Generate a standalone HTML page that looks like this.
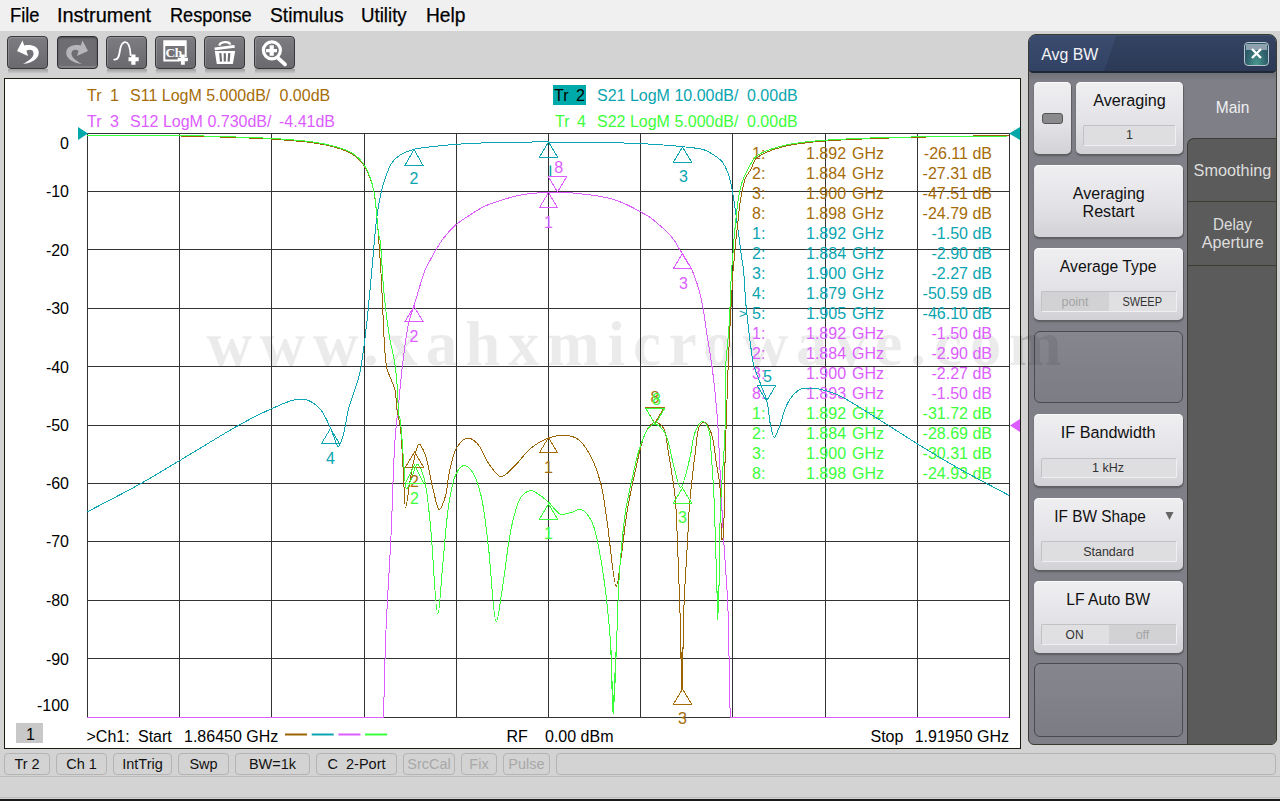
<!DOCTYPE html><html><head><meta charset="utf-8"><style>

*{box-sizing:border-box}
html,body{margin:0;padding:0;width:1280px;height:801px;overflow:hidden;background:#d3d3d3;font-family:"Liberation Sans",sans-serif;position:relative}
.abs{position:absolute}
#menu{left:0;top:0;width:1280px;height:31px;background:#f0f0f0}
.mi{position:absolute;top:3px;font-size:20px;line-height:24px;color:#000;white-space:pre;transform-origin:0 0;-webkit-text-stroke:0.25px #000}
.tb{position:absolute;top:36px;width:41px;height:33px;border-radius:4px;background:linear-gradient(#7c7c81,#69696e);border:1px solid #38383c;box-shadow:inset 1px 1px 0 rgba(255,255,255,.18)}
.tbsh{position:absolute;left:0px;top:32px;width:40px;height:5px;background:linear-gradient(rgba(0,0,0,.26),rgba(0,0,0,0))}
.tbd{background:#6d6d72;border-color:#303034;box-shadow:inset 0 -2px 0 rgba(255,255,255,.15),inset 0 1px 2px rgba(0,0,0,.3)}
.tb svg{position:absolute;left:-1px;top:-1px}
#chart{left:4px;top:78px;width:1017px;height:671px;background:#fff;border:1px solid #1c1c10}
#panel{left:1028px;top:34px;width:249px;height:711px;background:#7f7f87;border:1px solid #3a3a30;border-radius:8px 8px 6px 6px;overflow:hidden}
#ptitle{left:0;top:0;width:247px;height:38px;background:linear-gradient(rgba(255,255,255,0.03),rgba(0,0,0,0.05)),linear-gradient(109.4deg,#34466a 33.7%,#2e3d5c 33.8%);border-bottom:2px solid #1f2636;box-shadow:inset 0 1px 0 #3f5173;border-radius:0 0 4px 4px}
.pbtn{position:absolute;border-radius:5px;background:linear-gradient(#efeff2,#e2e2e6 60%,#d2d2d6);box-shadow:inset 0 1px 0 #fafafa,1px 1px 0 #5e5e63,0 2px 2px rgba(0,0,0,.3)}
.pbtn .t{position:absolute;left:0;width:100%;text-align:center;font-size:16px;color:#101010;line-height:19px}
.fld{position:absolute;background:#dedee0;border:1px solid;border-color:#c2c2c6 #f0f0f2 #f0f0f2 #c2c2c6;border-radius:2px}
.pempty{position:absolute;border-radius:6px;background:linear-gradient(#86868e,#7c7c84);border:1px solid #4a4a50}
.sb{position:absolute;top:753px;height:22px;border:1px solid #b4b4b4;border-radius:4px;font-size:14.5px;line-height:21px;text-align:center;color:#111;white-space:pre}
.sb.dis{color:#a8a8a8}

</style></head><body>
<div id="menu" class="abs"></div>
<div class="mi" style="left:10px;transform:scaleX(0.915)">File</div>
<div class="mi" style="left:57px;transform:scaleX(0.996)">Instrument</div>
<div class="mi" style="left:170px;transform:scaleX(0.907)">Response</div>
<div class="mi" style="left:270px;transform:scaleX(0.96)">Stimulus</div>
<div class="mi" style="left:361px;transform:scaleX(0.934)">Utility</div>
<div class="mi" style="left:426px;transform:scaleX(0.96)">Help</div>
<div class="tb" style="left:7px"><div class="tbsh"></div><svg width="41" height="33" viewBox="0 0 41 33"><path d="M10,15 L15.5,4.5 L17.2,9.4 C23,8 31.5,9.5 31.8,16.5 C32,22.5 25,27 16,28 C22.5,24.5 27,21 26.5,17 C26,13.5 22.5,13 19.4,14.8 L21,20 Z" fill="#fff"/></svg></div>
<div class="tb tbd" style="left:57px"><svg width="41" height="33" viewBox="0 0 41 33"><path d="M31,15 L25.5,4.5 L23.8,9.4 C18,8 9.5,9.5 9.2,16.5 C9,22.5 16,27 25,28 C18.5,24.5 14,21 14.5,17 C15,13.5 18.5,13 21.6,14.8 L20,20 Z" fill="#b6b6ba"/></svg></div>
<div class="tb" style="left:106px"><div class="tbsh"></div><svg width="41" height="33" viewBox="0 0 41 33"><path d="M8.2,23.6 C12,23.8 13,21 14,14 C15,8 17,6 19.4,6.1 C22.5,6.2 24,10 24.6,19" fill="none" stroke="#fff" stroke-width="1.8" stroke-linecap="round"/><path d="M25.3,18.6 h4.2 v2.7 h3.2 v3.9 h-3.2 v3.6 h-4.2 v-3.6 h-2.8 v-3.9 h2.8 z" fill="#fff"/></svg></div>
<div class="tb" style="left:155px"><div class="tbsh"></div><svg width="41" height="33" viewBox="0 0 41 33"><path d="M8.3,4.2 H31.7 V21 H29.7 V10 H10.3 V23.6 H24 V25.6 H8.3 Z" fill="#fff"/><text x="10.6" y="21" font-family="Liberation Serif" font-weight="bold" font-size="13.5" fill="#fff" letter-spacing="-0.5">Ch</text><path d="M25.9,18.6 h3.9 v3.1 h3.1 v3.5 h-3.1 v3.6 h-3.9 v-3.6 h-3.2 v-3.5 h3.2 z" fill="#fff"/></svg></div>
<div class="tb" style="left:204px"><div class="tbsh"></div><svg width="41" height="33" viewBox="0 0 41 33"><path d="M10.5,11.6 L30.4,9 L30.8,11.8 L10.8,14.3 Z" fill="#fff"/><path d="M15.4,9.6 C16,5.5 25.5,5 26.2,8.6" fill="none" stroke="#fff" stroke-width="2.3"/><path d="M10.8,15 H31.2 L28.8,28 H12.8 Z" fill="#fff"/><path d="M16.3,17.2 L17,25.6 M20.8,17.2 L20.8,25.6 M25.3,17.2 L24.6,25.6" stroke="#6c6c71" stroke-width="2.2"/></svg></div>
<div class="tb" style="left:254px"><div class="tbsh"></div><svg width="41" height="33" viewBox="0 0 41 33"><circle cx="17.9" cy="14.3" r="8.5" fill="none" stroke="#fff" stroke-width="3.2"/><path d="M23.8,21.8 L31,28.4" stroke="#fff" stroke-width="3.8" stroke-linecap="round"/><path d="M15.6,9.3 h4.2 v3.8 h3.2 v3.2 h-3.2 v3.5 h-4.2 v-3.5 h-3.6 v-3.2 h3.6 z" fill="#fff"/></svg></div>
<div id="chart" class="abs"></div>
<svg class="abs" style="left:0;top:0" width="1280" height="801" viewBox="0 0 1280 801"><defs><clipPath id="pc"><rect x="5" y="79" width="1015" height="669"/></clipPath></defs><g fill="#000" fill-opacity="0.08"><text x="206.5" y="364.5" font-family="Liberation Serif" font-weight="bold" font-size="63" textLength="855" lengthAdjust="spacing">www.xahxmicrowave.com</text></g><path d="M87.5,133 V717.5 M87,133.5 H1009.5 M179.5,133 V717.5 M87,191.5 H1009.5 M271.5,133 V717.5 M87,249.5 H1009.5 M364.5,133 V717.5 M87,308.5 H1009.5 M456.5,133 V717.5 M87,366.5 H1009.5 M548.5,133 V717.5 M87,425.5 H1009.5 M640.5,133 V717.5 M87,483.5 H1009.5 M732.5,133 V717.5 M87,541.5 H1009.5 M825.5,133 V717.5 M87,600.5 H1009.5 M917.5,133 V717.5 M87,658.5 H1009.5 M1009.5,133 V717.5 M87,717.5 H1009.5" stroke="#333" stroke-width="1" fill="none" shape-rendering="crispEdges"/><text x="69" y="148.5" text-anchor="end" font-size="16" fill="#000">0</text><text x="69" y="196.5" text-anchor="end" font-size="16" fill="#000">-10</text><text x="69" y="255.5" text-anchor="end" font-size="16" fill="#000">-20</text><text x="69" y="313.5" text-anchor="end" font-size="16" fill="#000">-30</text><text x="69" y="372.5" text-anchor="end" font-size="16" fill="#000">-40</text><text x="69" y="430.5" text-anchor="end" font-size="16" fill="#000">-50</text><text x="69" y="488.5" text-anchor="end" font-size="16" fill="#000">-60</text><text x="69" y="546.5" text-anchor="end" font-size="16" fill="#000">-70</text><text x="69" y="605.5" text-anchor="end" font-size="16" fill="#000">-80</text><text x="69" y="664.5" text-anchor="end" font-size="16" fill="#000">-90</text><text x="69" y="710.5" text-anchor="end" font-size="16" fill="#000">-100</text><text x="87" y="101" font-size="16" fill="#a56c08">Tr</text><text x="110" y="101" font-size="16" fill="#a56c08">1</text><text x="130" y="101" font-size="16" fill="#a56c08">S11 LogM 5.000dB/</text><text x="279.5" y="101" font-size="16" fill="#a56c08">0.00dB</text><text x="87" y="126.5" font-size="16" fill="#dc5cff">Tr</text><text x="110" y="126.5" font-size="16" fill="#dc5cff">3</text><text x="130" y="126.5" font-size="16" fill="#dc5cff">S12 LogM 0.730dB/</text><text x="279" y="126.5" font-size="16" fill="#dc5cff">-4.41dB</text><rect x="553" y="85" width="33" height="20" fill="#00aaaa"/><text x="554" y="101" font-size="16" fill="#000">Tr</text><text x="576" y="101" font-size="16" fill="#000">2</text><text x="597" y="101" font-size="16" fill="#0aa5b0">S21 LogM 10.00dB/</text><text x="747" y="101" font-size="16" fill="#0aa5b0">0.00dB</text><text x="555" y="126.5" font-size="16" fill="#3cff3c">Tr</text><text x="577" y="126.5" font-size="16" fill="#3cff3c">4</text><text x="597" y="126.5" font-size="16" fill="#3cff3c">S22 LogM 5.000dB/</text><text x="747" y="126.5" font-size="16" fill="#3cff3c">0.00dB</text><g fill="#a56c08" font-size="16"><text x="752" y="158.8">1:</text><text x="806" y="158.8">1.892</text><text x="852" y="158.8">GHz</text><text x="992" y="158.8" text-anchor="end">-26.11 dB</text></g><g fill="#a56c08" font-size="16"><text x="752" y="178.8">2:</text><text x="806" y="178.8">1.884</text><text x="852" y="178.8">GHz</text><text x="992" y="178.8" text-anchor="end">-27.31 dB</text></g><g fill="#a56c08" font-size="16"><text x="752" y="198.8">3:</text><text x="806" y="198.8">1.900</text><text x="852" y="198.8">GHz</text><text x="992" y="198.8" text-anchor="end">-47.51 dB</text></g><g fill="#a56c08" font-size="16"><text x="752" y="218.8">8:</text><text x="806" y="218.8">1.898</text><text x="852" y="218.8">GHz</text><text x="992" y="218.8" text-anchor="end">-24.79 dB</text></g><g fill="#0aa5b0" font-size="16"><text x="752" y="238.8">1:</text><text x="806" y="238.8">1.892</text><text x="852" y="238.8">GHz</text><text x="992" y="238.8" text-anchor="end">-1.50 dB</text></g><g fill="#0aa5b0" font-size="16"><text x="752" y="258.8">2:</text><text x="806" y="258.8">1.884</text><text x="852" y="258.8">GHz</text><text x="992" y="258.8" text-anchor="end">-2.90 dB</text></g><g fill="#0aa5b0" font-size="16"><text x="752" y="278.8">3:</text><text x="806" y="278.8">1.900</text><text x="852" y="278.8">GHz</text><text x="992" y="278.8" text-anchor="end">-2.27 dB</text></g><g fill="#0aa5b0" font-size="16"><text x="752" y="298.8">4:</text><text x="806" y="298.8">1.879</text><text x="852" y="298.8">GHz</text><text x="992" y="298.8" text-anchor="end">-50.59 dB</text></g><g fill="#0aa5b0" font-size="16"><text x="752" y="318.8">5:</text><text x="806" y="318.8">1.905</text><text x="852" y="318.8">GHz</text><text x="992" y="318.8" text-anchor="end">-46.10 dB</text></g><g fill="#dc5cff" font-size="16"><text x="752" y="338.8">1:</text><text x="806" y="338.8">1.892</text><text x="852" y="338.8">GHz</text><text x="992" y="338.8" text-anchor="end">-1.50 dB</text></g><g fill="#dc5cff" font-size="16"><text x="752" y="358.8">2:</text><text x="806" y="358.8">1.884</text><text x="852" y="358.8">GHz</text><text x="992" y="358.8" text-anchor="end">-2.90 dB</text></g><g fill="#dc5cff" font-size="16"><text x="752" y="378.8">3:</text><text x="806" y="378.8">1.900</text><text x="852" y="378.8">GHz</text><text x="992" y="378.8" text-anchor="end">-2.27 dB</text></g><g fill="#dc5cff" font-size="16"><text x="752" y="398.8">8:</text><text x="806" y="398.8">1.893</text><text x="852" y="398.8">GHz</text><text x="992" y="398.8" text-anchor="end">-1.50 dB</text></g><g fill="#3cff3c" font-size="16"><text x="752" y="418.8">1:</text><text x="806" y="418.8">1.892</text><text x="852" y="418.8">GHz</text><text x="992" y="418.8" text-anchor="end">-31.72 dB</text></g><g fill="#3cff3c" font-size="16"><text x="752" y="438.8">2:</text><text x="806" y="438.8">1.884</text><text x="852" y="438.8">GHz</text><text x="992" y="438.8" text-anchor="end">-28.69 dB</text></g><g fill="#3cff3c" font-size="16"><text x="752" y="458.8">3:</text><text x="806" y="458.8">1.900</text><text x="852" y="458.8">GHz</text><text x="992" y="458.8" text-anchor="end">-30.31 dB</text></g><g fill="#3cff3c" font-size="16"><text x="752" y="478.8">8:</text><text x="806" y="478.8">1.898</text><text x="852" y="478.8">GHz</text><text x="992" y="478.8" text-anchor="end">-24.93 dB</text></g><text x="739" y="318" font-size="13" fill="#0aa5b0">&gt;</text><g clip-path="url(#pc)" fill="none" stroke-width="1" shape-rendering="crispEdges"><path d="M87,717.5 H383.5 L383.50,717.00 C384.33,688.00 384.79,659.55 386.00,630.00 C387.26,599.27 389.51,567.50 391.00,536.00 C392.51,504.17 393.26,464.60 395.00,440.00 C396.09,424.60 397.50,415.00 398.75,402.50 C400.00,390.00 400.91,377.87 402.50,365.00 C404.20,351.26 406.14,333.95 408.75,322.50 C410.57,314.51 412.68,309.97 415.00,302.50 C417.95,292.98 422.34,276.52 425.00,270.00 C426.20,267.05 426.86,266.30 428.20,263.80 C430.28,259.91 433.61,253.57 436.40,249.00 C438.92,244.87 441.15,241.27 444.10,237.50 C447.29,233.42 450.99,229.06 455.00,225.50 C458.99,221.96 463.42,219.26 468.10,216.20 C473.22,212.85 478.98,208.99 484.60,206.30 C489.96,203.74 495.41,202.10 501.00,200.30 C506.70,198.46 512.72,196.59 518.50,195.40 C524.02,194.26 529.68,193.68 534.90,193.20 C539.64,192.76 544.16,192.65 548.50,192.50 C552.49,192.36 556.21,192.25 560.00,192.30 C563.71,192.35 567.19,192.49 571.00,192.80 C575.16,193.13 579.56,193.78 584.00,194.30 C588.65,194.85 593.56,195.19 598.30,196.00 C603.06,196.82 607.91,197.83 612.50,199.20 C617.00,200.54 621.16,202.12 625.60,204.10 C630.45,206.26 635.92,209.35 640.40,211.80 C644.20,213.88 647.68,215.59 650.80,217.80 C653.66,219.83 655.95,222.20 658.50,224.40 C661.05,226.60 663.64,228.56 666.10,231.00 C668.75,233.62 671.57,236.64 673.80,239.70 C675.95,242.65 677.69,246.41 679.30,249.00 C680.49,250.91 681.33,251.96 682.50,253.90 C684.13,256.60 686.54,261.65 688.00,263.80 C688.77,264.94 689.24,264.96 690.00,266.25 C691.92,269.50 695.42,278.58 697.50,285.00 C699.60,291.49 701.09,297.93 702.50,305.00 C704.06,312.83 704.83,320.69 706.25,330.00 C708.05,341.78 710.69,355.90 712.50,370.00 C714.51,385.71 716.25,403.32 717.50,420.00 C718.75,436.65 719.17,453.33 720.00,470.00 C720.83,486.67 721.61,504.26 722.50,520.00 C723.29,534.08 724.14,546.27 725.00,560.00 C725.91,574.56 727.06,587.22 727.80,605.00 C728.87,630.81 729.32,681.17 729.80,700.00 C730.00,707.96 730.13,711.33 730.30,717.00 H1009" stroke="#dc5cff"/><path d="M87.00,512.00 C104.67,502.67 123.78,493.06 140.00,484.00 C154.09,476.13 164.51,469.59 179.00,461.00 C197.29,450.15 223.90,433.36 241.00,424.00 C252.66,417.62 261.35,413.23 271.00,409.00 C279.61,405.22 289.08,400.53 296.00,399.50 C300.64,398.81 304.15,398.88 308.00,400.30 C312.40,401.92 317.06,405.61 320.60,409.70 C324.56,414.27 327.63,421.96 330.00,427.00 C331.75,430.73 332.65,433.72 334.00,437.00 C335.32,440.21 336.55,446.44 338.00,446.50 C339.40,446.56 341.12,441.83 342.50,438.00 C344.96,431.17 346.21,417.48 348.75,408.00 C351.11,399.22 354.98,389.57 357.00,383.00 C358.30,378.77 358.99,377.27 360.00,372.50 C362.05,362.77 364.54,341.83 366.25,327.50 C367.81,314.45 368.73,303.40 370.00,290.00 C371.47,274.53 373.27,252.91 374.50,240.00 C375.28,231.83 375.55,227.15 376.50,220.00 C377.61,211.66 379.16,201.04 381.00,193.00 C382.52,186.34 384.17,180.44 386.25,175.00 C388.08,170.23 389.94,165.48 392.50,162.00 C394.66,159.06 396.91,156.98 400.00,155.00 C403.72,152.62 408.89,150.74 413.75,149.40 C418.86,147.99 423.99,147.66 430.00,146.90 C437.43,145.96 445.82,145.08 455.00,144.40 C466.23,143.57 478.75,143.00 492.50,142.60 C509.30,142.11 527.45,141.92 548.50,142.00 C575.69,142.10 616.00,142.44 642.00,143.70 C660.66,144.61 678.80,146.14 690.00,147.50 C696.08,148.24 699.59,148.25 704.00,149.80 C708.46,151.37 713.36,154.62 716.60,156.90 C718.88,158.51 720.36,159.55 722.00,161.60 C724.08,164.19 726.06,168.22 727.50,171.70 C728.91,175.09 729.75,178.75 730.60,182.20 C731.40,185.48 731.86,188.28 732.50,191.90 C733.32,196.48 734.26,202.34 735.00,207.50 C735.72,212.54 736.20,217.31 736.90,222.50 C737.66,228.11 738.65,234.39 739.40,240.00 C740.09,245.19 740.57,250.00 741.25,255.00 C741.93,260.00 742.86,264.09 743.50,270.00 C744.42,278.46 744.84,291.93 745.60,301.00 C746.20,308.11 746.74,313.24 747.50,320.00 C748.37,327.77 749.60,337.47 750.60,345.00 C751.42,351.22 751.93,357.12 753.00,362.00 C753.84,365.81 754.78,368.42 756.00,372.00 C757.45,376.26 759.53,381.04 761.30,385.80 C763.19,390.88 765.54,395.79 767.00,401.60 C768.69,408.34 768.87,417.52 770.30,424.00 C771.43,429.11 772.68,437.39 774.30,437.50 C775.89,437.61 778.19,429.61 779.90,425.20 C781.79,420.31 783.06,414.15 785.00,409.40 C786.69,405.28 788.06,401.52 790.60,398.20 C793.24,394.75 797.13,390.71 800.70,389.20 C803.66,387.94 806.96,388.54 810.00,388.50 C812.92,388.46 815.23,388.31 818.60,388.90 C823.66,389.78 829.84,391.32 837.20,394.60 C849.53,400.09 869.56,413.79 884.00,422.70 C896.62,430.48 907.42,437.76 919.20,445.00 C930.89,452.19 941.29,458.57 954.40,466.00 C970.52,475.14 990.80,485.60 1009.00,495.40" stroke="#0aa5b0"/><path d="M87.00,136.00 C118.00,136.00 155.45,135.69 180.00,136.00 C196.11,136.20 205.86,136.55 220.00,137.00 C235.97,137.51 258.12,138.24 271.00,139.00 C278.87,139.46 283.37,139.91 290.00,140.50 C297.30,141.15 305.36,141.64 313.00,142.80 C320.70,143.97 329.11,145.42 336.00,147.50 C341.91,149.29 347.73,151.47 352.00,154.00 C355.30,155.95 357.67,158.01 360.00,160.50 C362.34,163.00 364.18,165.64 366.00,169.00 C368.27,173.18 370.59,179.59 372.00,184.00 C373.07,187.34 373.55,189.41 374.20,193.00 C375.14,198.22 375.80,205.36 376.50,212.40 C377.34,220.78 378.02,230.09 378.75,240.00 C379.61,251.54 380.54,265.00 381.25,277.50 C381.96,290.00 382.38,302.50 383.00,315.00 C383.63,327.50 384.13,342.59 385.00,352.50 C385.58,359.04 385.80,363.89 387.00,368.75 C388.03,372.91 389.88,376.36 391.25,380.00 C392.54,383.43 394.07,386.02 395.00,390.00 C396.27,395.46 396.06,403.62 397.00,410.00 C397.87,415.92 399.38,419.89 400.30,427.00 C401.82,438.69 402.46,459.38 403.40,473.75 C404.20,486.05 404.41,507.94 405.60,508.00 C406.63,508.05 408.24,491.32 409.70,483.00 C411.17,474.66 412.58,465.08 414.40,458.00 C415.79,452.61 417.09,444.19 419.00,444.00 C420.77,443.82 423.41,450.14 425.30,455.00 C428.44,463.06 430.36,479.11 433.00,489.00 C435.08,496.80 437.09,509.57 439.40,509.70 C441.34,509.81 444.00,501.02 445.60,495.60 C447.60,488.83 447.54,479.84 449.40,471.90 C451.35,463.61 453.26,452.76 457.20,446.90 C460.08,442.61 464.42,438.26 468.00,438.00 C471.19,437.77 474.49,440.67 477.50,443.75 C482.03,448.39 485.55,459.78 490.00,465.60 C493.49,470.17 497.00,476.36 501.00,476.60 C505.28,476.86 510.39,469.90 515.00,465.60 C520.27,460.69 524.80,453.07 530.60,448.40 C536.11,443.97 542.67,440.17 548.75,438.00 C554.14,436.08 559.97,434.99 565.00,435.30 C569.47,435.58 573.69,436.43 577.50,439.00 C582.22,442.18 586.39,448.29 590.00,454.70 C594.54,462.75 598.20,473.87 601.00,484.40 C604.01,495.74 604.87,506.74 607.00,520.60 C609.86,539.24 613.57,586.21 616.25,586.25 C618.01,586.27 619.41,568.62 621.00,558.00 C623.05,544.33 624.85,525.25 627.20,511.00 C629.18,499.00 630.98,489.91 633.75,478.00 C637.07,463.72 641.12,440.33 646.25,431.25 C648.82,426.70 651.71,422.86 654.70,422.50 C657.45,422.17 661.25,424.90 663.40,428.00 C666.57,432.58 666.54,442.08 668.00,450.00 C669.70,459.21 671.50,471.00 672.80,480.00 C673.86,487.33 674.70,492.18 675.40,500.00 C676.39,510.99 676.75,524.90 677.40,539.80 C678.23,558.86 679.07,581.83 679.80,605.00 C680.63,631.46 681.30,690.00 682.00,690.00 C682.70,690.00 682.96,631.45 684.00,605.00 C684.91,581.82 686.61,557.90 687.60,539.80 C688.31,526.88 688.61,517.05 689.40,506.60 C690.11,497.23 691.05,488.72 692.00,480.00 C692.92,471.53 693.75,463.70 695.00,455.00 C696.37,445.44 696.78,429.36 700.00,425.00 C701.38,423.13 703.44,422.04 705.00,422.50 C707.31,423.18 709.56,428.41 711.25,433.00 C713.89,440.18 714.74,453.07 716.25,462.50 C717.64,471.17 719.07,477.61 720.00,487.50 C721.34,501.76 720.55,539.69 722.00,540.00 C722.30,540.06 722.71,539.18 723.00,538.00 C724.50,531.99 723.98,498.62 724.50,480.00 C724.98,462.71 725.54,444.55 726.00,430.00 C726.36,418.73 726.66,410.20 727.00,400.00 C727.36,389.38 727.68,378.00 728.10,367.50 C728.49,357.62 728.97,348.00 729.40,338.75 C729.80,330.13 730.16,321.74 730.60,313.75 C731.00,306.38 731.49,299.69 731.90,292.50 C732.32,285.11 732.60,276.40 733.10,270.00 C733.48,265.22 734.00,261.86 734.40,257.50 C734.84,252.73 735.10,247.60 735.60,242.50 C736.12,237.19 736.89,231.86 737.50,226.25 C738.16,220.23 738.61,213.39 739.40,207.50 C740.11,202.21 740.87,197.48 741.90,192.50 C742.94,187.48 743.83,181.52 745.60,177.50 C746.95,174.43 749.09,172.75 750.60,170.00 C752.26,166.97 753.05,162.60 755.00,160.00 C756.65,157.81 758.21,156.63 761.00,155.00 C765.73,152.23 774.91,148.97 782.00,147.00 C788.91,145.08 795.90,144.20 803.00,143.20 C810.23,142.19 816.48,141.65 825.00,141.00 C836.75,140.11 852.39,139.42 867.00,138.80 C882.94,138.13 897.81,137.71 917.00,137.20 C943.03,136.51 978.33,135.93 1009.00,135.30" stroke="#9a6400"/><path d="M87.00,135.50 C118.00,135.50 155.45,135.19 180.00,135.50 C196.11,135.70 205.86,136.06 220.00,136.50 C235.97,137.00 258.12,137.72 271.00,138.40 C278.87,138.82 283.37,139.14 290.00,139.70 C297.31,140.32 305.36,140.83 313.00,142.00 C320.70,143.18 329.10,144.71 336.00,146.75 C341.90,148.50 347.78,150.54 352.00,153.00 C355.21,154.87 357.60,157.12 359.70,159.25 C361.46,161.03 362.57,162.42 364.00,164.70 C366.01,167.90 368.35,172.54 370.00,177.00 C371.82,181.90 373.13,187.37 374.20,193.00 C375.36,199.12 375.77,205.69 376.50,212.40 C377.28,219.62 377.86,230.08 378.70,234.90 C379.11,237.22 379.57,237.39 380.00,240.00 C381.32,248.04 382.21,274.03 383.75,290.00 C385.17,304.76 386.71,319.32 388.75,332.50 C390.54,344.09 393.52,354.84 395.00,365.00 C396.29,373.85 396.87,381.66 397.50,390.00 C398.12,398.33 397.89,409.68 398.75,415.00 C399.16,417.57 399.81,417.88 400.30,420.60 C401.53,427.52 402.29,446.12 403.40,458.00 C404.41,468.82 404.56,488.64 406.60,489.00 C407.75,489.21 409.45,483.44 411.00,480.00 C413.02,475.54 415.27,464.47 417.50,464.40 C419.53,464.33 421.99,471.35 423.75,477.00 C426.86,487.00 428.04,503.28 430.00,520.60 C432.86,545.92 435.43,614.38 437.80,614.40 C439.48,614.41 440.82,584.25 442.50,567.50 C444.44,548.16 445.97,521.98 448.75,505.00 C450.69,493.11 452.19,481.92 455.60,475.00 C457.75,470.64 460.57,466.08 463.40,465.60 C465.85,465.18 468.91,467.55 471.25,470.30 C475.13,474.86 478.03,484.17 480.60,493.75 C484.35,507.72 485.98,527.63 488.40,546.90 C491.27,569.73 493.37,621.79 496.25,621.90 C498.21,621.97 500.31,600.68 502.50,587.50 C505.44,569.77 507.92,541.59 511.90,525.00 C514.62,513.64 516.94,502.58 521.25,496.90 C523.91,493.40 527.42,490.81 530.60,490.60 C533.67,490.40 536.97,493.34 540.00,495.30 C543.26,497.41 546.23,500.11 549.40,503.00 C552.98,506.26 556.29,512.64 560.30,514.00 C563.68,515.15 567.78,513.31 571.25,512.50 C574.53,511.74 577.61,508.65 580.60,509.40 C584.35,510.34 588.31,515.25 591.25,520.60 C595.89,529.04 597.86,543.17 600.60,558.00 C604.51,579.18 607.92,609.92 610.00,636.00 C612.08,662.06 611.99,714.39 613.10,714.40 C614.09,714.41 615.25,673.98 616.25,652.00 C617.37,627.39 617.69,598.37 619.40,573.75 C620.93,551.66 623.01,528.21 625.60,511.00 C627.44,498.81 629.55,490.48 631.90,480.00 C634.33,469.12 636.64,456.39 640.00,446.90 C642.70,439.27 645.91,430.41 649.40,427.00 C651.32,425.12 653.36,423.95 655.50,424.30 C658.47,424.79 662.32,428.57 665.00,433.00 C669.54,440.51 671.44,458.78 674.40,468.75 C676.56,476.04 678.35,487.52 680.60,487.50 C683.44,487.48 687.54,467.11 690.00,457.50 C692.21,448.85 692.31,438.99 695.00,432.50 C696.96,427.77 700.09,421.29 702.50,421.25 C704.65,421.22 707.27,426.08 708.75,430.00 C711.00,435.99 710.49,445.82 711.25,455.00 C712.19,466.23 713.07,479.10 713.75,492.50 C714.54,507.96 714.96,525.83 715.50,542.50 C716.04,559.17 716.63,578.31 717.00,592.50 C717.27,603.03 717.40,610.83 717.60,620.00" stroke="#3cff3c"/><path d="M717.60,620.00 C717.98,613.33 718.45,608.39 718.75,600.00 C719.25,585.78 719.06,560.99 719.50,542.50 C719.91,525.25 720.46,507.96 721.25,492.50 C721.93,479.10 723.09,466.24 723.75,455.00 C724.29,445.83 724.70,440.21 725.00,430.00 C725.48,413.86 724.87,383.11 725.60,367.50 C726.04,358.11 726.88,352.70 727.50,345.00 C728.15,336.89 728.89,328.54 729.40,320.00 C729.93,311.06 730.24,301.21 730.60,292.50 C730.93,284.62 731.08,276.00 731.50,270.00 C731.78,265.99 732.17,263.80 732.50,260.00 C732.93,254.98 733.26,248.53 733.75,242.50 C734.28,236.05 734.95,228.94 735.60,222.50 C736.21,216.47 736.73,210.60 737.50,205.00 C738.22,199.80 738.90,194.74 740.00,190.00 C741.02,185.61 742.33,181.09 743.75,177.50 C744.89,174.63 745.97,172.78 747.50,170.00 C749.52,166.33 752.31,160.38 755.00,157.50 C756.91,155.46 758.27,154.71 761.00,153.30 C765.77,150.85 774.92,147.74 782.00,145.90 C788.92,144.10 795.90,143.25 803.00,142.30 C810.23,141.34 816.48,140.82 825.00,140.20 C836.75,139.35 852.39,138.64 867.00,138.10 C882.94,137.51 897.81,137.22 917.00,136.90 C943.03,136.46 978.33,136.30 1009.00,136.00" stroke="#3cff3c"/><path d="M679.8,605 L682,690 L684,605" stroke="#9a6400"/><path d="M611,650 L613.1,714 L616,652" stroke="#3cff3c"/><path d="M716.8,580 L717.6,620 L718.9,585" stroke="#3cff3c"/></g><path d="M414,149.4 L423,165.4 L405,165.4 Z" fill="none" stroke="#0aa5b0" stroke-width="1" shape-rendering="crispEdges"/><text x="414" y="184.4" text-anchor="middle" font-size="16" fill="#0aa5b0">2</text><path d="M548.5,142 L557.5,157 L539.5,157 Z" fill="none" stroke="#0aa5b0" stroke-width="1" shape-rendering="crispEdges"/><path d="M550.5,165.5 V176.5" stroke="#0aa5b0" stroke-width="1.6"/><path d="M682.5,147 L691.5,162 L673.5,162 Z" fill="none" stroke="#0aa5b0" stroke-width="1" shape-rendering="crispEdges"/><text x="683.5" y="182" text-anchor="middle" font-size="16" fill="#0aa5b0">3</text><path d="M330.5,428.5 L339.5,443.5 L321.5,443.5 Z" fill="none" stroke="#0aa5b0" stroke-width="1" shape-rendering="crispEdges"/><text x="330.5" y="463.5" text-anchor="middle" font-size="16" fill="#0aa5b0">4</text><path d="M766.5,401 L776.0,385 L757.0,385 Z" fill="none" stroke="#0aa5b0" stroke-width="1" shape-rendering="crispEdges"/><text x="767.5" y="382" text-anchor="middle" font-size="16" fill="#0aa5b0">5</text><path d="M548.5,192.5 L557.5,207.5 L539.5,207.5 Z" fill="none" stroke="#dc5cff" stroke-width="1" shape-rendering="crispEdges"/><text x="548.5" y="227.5" text-anchor="middle" font-size="16" fill="#dc5cff">1</text><path d="M414,306.5 L423,321.5 L405,321.5 Z" fill="none" stroke="#dc5cff" stroke-width="1" shape-rendering="crispEdges"/><text x="414" y="341.5" text-anchor="middle" font-size="16" fill="#dc5cff">2</text><path d="M682.5,253.5 L691.5,268.5 L673.5,268.5 Z" fill="none" stroke="#dc5cff" stroke-width="1" shape-rendering="crispEdges"/><text x="683.5" y="288.5" text-anchor="middle" font-size="16" fill="#dc5cff">3</text><path d="M557.5,192.1 L567.0,176.1 L548.0,176.1 Z" fill="none" stroke="#dc5cff" stroke-width="1" shape-rendering="crispEdges"/><text x="558.6" y="172.5" text-anchor="middle" font-size="16" fill="#dc5cff">8</text><path d="M414.5,452 L423.5,467 L405.5,467 Z" fill="none" stroke="#a56c08" stroke-width="1" shape-rendering="crispEdges"/><text x="414.5" y="487" text-anchor="middle" font-size="16" fill="#a56c08">2</text><path d="M548.5,437.5 L557.5,452.5 L539.5,452.5 Z" fill="none" stroke="#a56c08" stroke-width="1" shape-rendering="crispEdges"/><text x="548.5" y="472.5" text-anchor="middle" font-size="16" fill="#a56c08">1</text><path d="M682.5,689 L691.5,704 L673.5,704 Z" fill="none" stroke="#a56c08" stroke-width="1" shape-rendering="crispEdges"/><text x="682.5" y="724" text-anchor="middle" font-size="16" fill="#a56c08">3</text><path d="M654.7,423.4 L664.2,407.4 L645.2,407.4 Z" fill="none" stroke="#a56c08" stroke-width="1" shape-rendering="crispEdges"/><text x="655" y="403" text-anchor="middle" font-size="16" fill="#a56c08">8</text><path d="M414.5,465 L423.5,483 L405.5,483 Z" fill="none" stroke="#3cff3c" stroke-width="1" shape-rendering="crispEdges"/><text x="414.5" y="504" text-anchor="middle" font-size="16" fill="#3cff3c">2</text><path d="M548.5,504 L557.5,519 L539.5,519 Z" fill="none" stroke="#3cff3c" stroke-width="1" shape-rendering="crispEdges"/><text x="548.5" y="539" text-anchor="middle" font-size="16" fill="#3cff3c">1</text><path d="M682.5,488 L691.5,503 L673.5,503 Z" fill="none" stroke="#3cff3c" stroke-width="1" shape-rendering="crispEdges"/><text x="682.5" y="523" text-anchor="middle" font-size="16" fill="#3cff3c">3</text><path d="M655.2,424.4 L664.7,408.4 L645.7,408.4 Z" fill="none" stroke="#3cff3c" stroke-width="1" shape-rendering="crispEdges"/><text x="656.5" y="404.7" text-anchor="middle" font-size="16" fill="#3cff3c">8</text><path d="M78,127 L88,133.5 L78,140 Z" fill="#00a8aa"/><path d="M1020,127 L1009,133.5 L1020,140 Z" fill="#00a8aa"/><path d="M1020,419 L1010,425.5 L1020,432 Z" fill="#dc5cff"/><rect x="16" y="723" width="27" height="20" fill="#c8c8c8"/><text x="30.5" y="739.5" text-anchor="middle" font-size="16" fill="#000">1</text><g font-size="16" fill="#000"><text x="86.5" y="741.5">&gt;Ch1:</text><text x="138" y="741.5">Start</text><text x="184" y="741.5">1.86450 GHz</text><text x="506.5" y="741.5">RF</text><text x="545" y="741.5">0.00 dBm</text><text x="870.5" y="741.5">Stop</text><text x="1009" y="741.5" text-anchor="end">1.91950 GHz</text></g><path d="M285.0,734.5 h22" stroke="#9a6400" stroke-width="2"/><path d="M311.7,734.5 h22" stroke="#0aa5b0" stroke-width="2"/><path d="M338.4,734.5 h22" stroke="#dc5cff" stroke-width="2"/><path d="M365.1,734.5 h22" stroke="#3cff3c" stroke-width="2"/></svg>
<div id="panel" class="abs">
<div class="abs" style="left:0;top:38px;width:247px;height:8px;background:linear-gradient(rgba(0,0,0,.12),rgba(0,0,0,0))"></div>
<div id="ptitle" class="abs"></div>
<div class="abs" style="left:215px;top:7px;width:25px;height:24px;border:1px solid #b8c4cc;border-radius:4px;background:radial-gradient(ellipse at 50% 100%,#4a9a90,#2d5a68 70%);overflow:hidden"><div class="abs" style="left:1px;top:1px;width:21px;height:6px;background:#8fa0ae"></div><svg class="abs" style="left:0;top:0" width="23" height="22"><path d="M7 6 L16 15 M16 6 L7 15" stroke="#fff" stroke-width="2.4"/></svg></div>
<div class="abs" style="left:158px;top:103px;width:90px;height:607px;background:#5b5b5b;border-left:1px solid #3c3c34;border-top:1px solid #3c3c34;border-radius:7px 0 0 0"></div>
<div class="abs" style="left:158px;top:166px;width:90px;height:1px;background:#3c3c34"></div>
<div class="abs" style="left:158px;top:230px;width:90px;height:1px;background:#3c3c34"></div>
<div class="pbtn" style="left:5px;top:47px;width:37px;height:72px"><div class="abs" style="left:8px;top:31px;width:21px;height:11px;border-radius:3px;background:#8a8a8c;border:1px solid #555"></div></div>
<div class="pbtn" style="left:47px;top:47px;width:107px;height:72px"></div>
<div class="fld" style="left:54px;top:90px;width:93px;height:21px"></div>
<div class="pbtn" style="left:5px;top:130px;width:149px;height:72px"></div>
<div class="pbtn" style="left:5px;top:213px;width:149px;height:72px"></div>
<div class="fld" style="left:12px;top:256px;width:136px;height:21px;background:linear-gradient(90deg,#d2d2d4 50%,#e0e0e2 50%)"></div>
<div class="pempty" style="left:5px;top:296px;width:149px;height:72px"></div>
<div class="pbtn" style="left:5px;top:379px;width:149px;height:72px"></div>
<div class="fld" style="left:12px;top:423px;width:136px;height:20px"></div>
<div class="pbtn" style="left:5px;top:463px;width:149px;height:72px"></div>
<div class="fld" style="left:12px;top:506px;width:136px;height:21px"></div>
<div class="pbtn" style="left:5px;top:546px;width:149px;height:72px"></div>
<div class="fld" style="left:12px;top:589px;width:136px;height:21px;background:linear-gradient(90deg,#e0e0e2 50%,#d2d2d4 50%)"></div>
<div class="pempty" style="left:5px;top:628px;width:149px;height:74px"></div>
</div>
<svg class="abs" style="left:0;top:0" width="1280" height="801"><text x="1041.2" y="59.8" font-size="17.3" fill="#f4f4f6" textLength="57.1" lengthAdjust="spacingAndGlyphs">Avg BW</text><text x="1215.8" y="112.8" font-size="17" fill="#f0f0f2" textLength="33.6" lengthAdjust="spacingAndGlyphs">Main</text><text x="1193.6" y="176" font-size="17" fill="#dedede" textLength="77.8" lengthAdjust="spacingAndGlyphs">Smoothing</text><text x="1213.0" y="229.5" font-size="17" fill="#dedede" textLength="38.8" lengthAdjust="spacingAndGlyphs">Delay</text><text x="1201.7" y="248" font-size="17" fill="#dedede" textLength="62.0" lengthAdjust="spacingAndGlyphs">Aperture</text><text x="1093.2" y="106.2" font-size="17.4" fill="#111" textLength="72.6" lengthAdjust="spacingAndGlyphs">Averaging</text><text x="1129.5" y="139" font-size="12.5" fill="#333" text-anchor="middle">1</text><text x="1072.8" y="198.7" font-size="17.4" fill="#111" textLength="72.0" lengthAdjust="spacingAndGlyphs">Averaging</text><text x="1082.5" y="216.5" font-size="17.4" fill="#111" textLength="51.9" lengthAdjust="spacingAndGlyphs">Restart</text><text x="1059.8" y="271.75" font-size="17.4" fill="#111" textLength="96.7" lengthAdjust="spacingAndGlyphs">Average Type</text><text x="1075" y="305.5" font-size="12.5" fill="#a4a4a4" text-anchor="middle">point</text><text x="1122.4" y="305.5" font-size="12.5" fill="#333" textLength="39.6" lengthAdjust="spacingAndGlyphs">SWEEP</text><text x="1060.8" y="438.3" font-size="17.4" fill="#111" textLength="94.7" lengthAdjust="spacingAndGlyphs">IF Bandwidth</text><text x="1108" y="471.5" font-size="12.5" fill="#333" text-anchor="middle">1 kHz</text><text x="1054.2" y="521.75" font-size="17.4" fill="#111" textLength="91.6" lengthAdjust="spacingAndGlyphs">IF BW Shape</text><path d="M1165.5,512 h8 l-4,8 z" fill="#666"/><text x="1108.5" y="555.5" font-size="12.5" fill="#333" text-anchor="middle">Standard</text><text x="1066.2" y="604.5" font-size="17.4" fill="#111" textLength="83.8" lengthAdjust="spacingAndGlyphs">LF Auto BW</text><text x="1065.6" y="638.8" font-size="12.5" fill="#333" textLength="17.9" lengthAdjust="spacingAndGlyphs">ON</text><text x="1142.5" y="638.8" font-size="12.5" fill="#a4a4a4" text-anchor="middle">off</text></svg>
<div class="sb" style="left:4px;width:46px">Tr 2</div>
<div class="sb" style="left:56px;width:51px">Ch 1</div>
<div class="sb" style="left:113px;width:59px">IntTrig</div>
<div class="sb" style="left:178px;width:51px">Swp</div>
<div class="sb" style="left:235px;width:75px">BW=1k</div>
<div class="sb" style="left:316px;width:81px">C  2-Port</div>
<div class="sb dis" style="left:403px;width:52px">SrcCal</div>
<div class="sb dis" style="left:461px;width:36px">Fix</div>
<div class="sb dis" style="left:503px;width:47px">Pulse</div>
<div class="sb" style="left:556px;width:720px"></div>
<div class="abs" style="left:0;top:776px;width:1280px;height:1px;background:#bcbcbc"></div>
<div class="abs" style="left:0;top:797px;width:1280px;height:1px;background:#bcbcbc"></div>
<div class="abs" style="left:0;top:799px;width:1280px;height:2px;background:#1a1a1a"></div>
<svg class="abs" style="left:0;top:0" width="1280" height="801"><defs><clipPath id="wmc"><rect x="1021" y="0" width="259" height="801"/></clipPath></defs><g clip-path="url(#wmc)" fill="#000" fill-opacity="0.08"><text x="206.5" y="364.5" font-family="Liberation Serif" font-weight="bold" font-size="63" textLength="855" lengthAdjust="spacing">www.xahxmicrowave.com</text></g></svg>
</body></html>
